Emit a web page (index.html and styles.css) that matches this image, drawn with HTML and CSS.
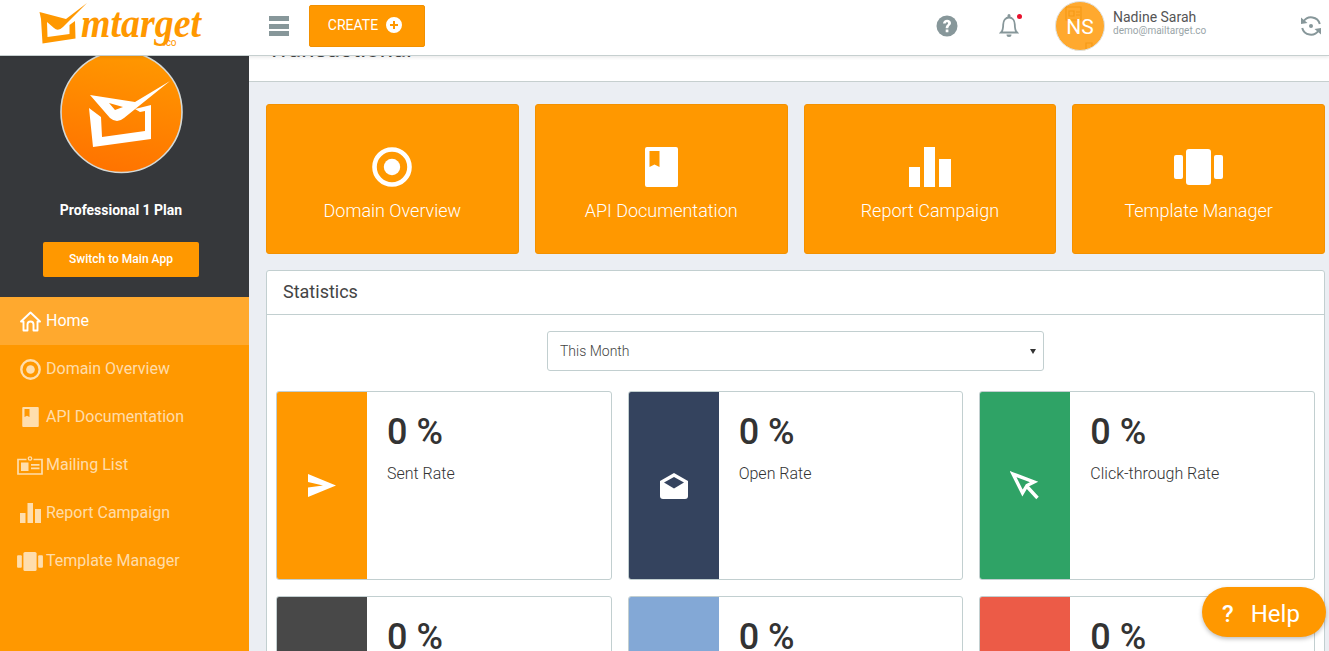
FILE: index.html
```html
<!DOCTYPE html>
<html lang="en">
<head>
<meta charset="utf-8">
<title>mtarget</title>
<link rel="stylesheet" href="styles.css">
</head>
<body>
<svg class="defs" aria-hidden="true">
  <symbol id="i-target" viewBox="0 0 40 40"><circle cx="20" cy="20" r="17.5" fill="none" stroke="currentColor" stroke-width="4.6"/><circle cx="20" cy="20" r="8.2" fill="currentColor"/></symbol>
  <symbol id="i-book" viewBox="0 0 33 40"><path fill="currentColor" fill-rule="evenodd" d="M2 0H31a2 2 0 0 1 2 2V38a2 2 0 0 1-2 2H2a2 2 0 0 1-2-2V2a2 2 0 0 1 2-2ZM4.500 4V20L9.500 17.500 14.500 20V4Z"/></symbol>
  <symbol id="i-bars" viewBox="0 0 42 40"><path fill="currentColor" d="M0 20H11V40H0ZM15 0H26V40H15ZM30 12H42V40H30Z"/></symbol>
  <symbol id="i-carousel" viewBox="0 0 49 36"><rect x="0" y="6" width="9" height="24" rx="2" fill="currentColor"/><rect x="12" y="0" width="25" height="36" rx="3" fill="currentColor"/><rect x="40" y="6" width="9" height="24" rx="2" fill="currentColor"/></symbol>
  <symbol id="i-id" viewBox="0 0 26 19"><path fill="none" stroke="currentColor" stroke-width="1.700" d="M9.500 3.500H1V18H25V3.500H16.500"/><circle cx="13" cy="2.500" r="1.700" fill="none" stroke="currentColor" stroke-width="1.300"/><path fill="currentColor" d="M4 6.500H11.500V15H4ZM14 8H22.500V9.800H14ZM14 11.500H22.500V13.300H14Z"/></symbol>
</svg>

<div class="app">
  <header class="topbar">
    <a class="logo" href="#" aria-label="mtarget.co">
      <svg width="210" height="52" viewBox="0 0 210 52">
        <path class="logo-flap" fill-rule="evenodd" d="M41 19 39.500 12 66 19 87 3 63 27Q58 32 54 28L47 22 47.500 37 69.500 34 69.500 25 75 21 75.500 38.500 42.500 43.500Z"/>
        <text class="logo-word" x="81" y="37" textLength="120" lengthAdjust="spacingAndGlyphs">mtarget</text>
        <text class="logo-co" x="163" y="46">.co</text>
      </svg>
    </a>
    <button class="burger" aria-label="Menu"><span></span><span></span><span></span></button>
    <button class="create">CREATE
      <svg width="16" height="16" viewBox="0 0 16 16"><path fill="#fff" fill-rule="evenodd" d="M8 0a8 8 0 1 1 0 16A8 8 0 0 1 8 0ZM7 4V7H4V9H7V12H9V9H12V7H9V4Z"/></svg>
    </button>
    <div class="top-right">
      <svg class="help-ic" width="22" height="22" viewBox="0 0 22 22"><circle cx="11" cy="11" r="10.500" fill="#87979a"/><path d="M7 8.500C7.100 6 9 4.700 11.100 4.700 13.400 4.700 15 6.100 15 8.100 15 10.600 12.400 10.800 12.400 13.300H9.700C9.700 10 12.100 9.800 12.100 8.300 12.100 7.700 11.700 7.300 11 7.300 10.300 7.300 9.900 7.800 9.800 8.500ZM9.700 14.500H12.400V17.200H9.700Z" fill="#fff"/></svg>
      <div class="bell">
        <svg width="20" height="24" viewBox="0 0 20 24"><path fill="none" stroke="#87979a" stroke-width="1.800" d="M2 18.500C4 16.500 4.200 15 4.200 10.500 4.200 6.500 6.500 3.500 10 3.500S15.800 6.500 15.800 10.500C15.800 15 16 16.500 18 18.500Z"/><path fill="#87979a" d="M8.500 1.500a1.500 1.500 0 0 1 3 0V4h-3ZM7.500 20.500h5a2.500 2.500 0 0 1-5 0Z"/></svg>
        <i class="dot"></i>
      </div>
      <div class="user">
        <div class="avatar">
          <svg class="avatar-deco" width="48" height="48" viewBox="0 0 48 48"><g fill="none" stroke="#f59a16" stroke-width="1.200"><path d="M10 5H25V18H10Z"/><path d="M13 9H18V14H13ZM20 10H24M20 13H24"/><path d="M30 47V41H36V47"/></g></svg>
          <span>NS</span>
        </div>
        <div class="user-text">
          <div class="user-name">Nadine Sarah</div>
          <div class="user-mail">demo@mailtarget.co</div>
        </div>
      </div>
      <svg class="sync" width="22" height="22" viewBox="0 0 22 22"><path fill="none" stroke="#87979a" stroke-width="2" d="M3.500 6.500A9 9 0 0 1 19.800 9M18.500 15.500A9 9 0 0 1 2.200 13"/><path fill="#87979a" d="M1 2.500 7.500 8 1 9ZM21 19.500 14.500 14 21 13Z"/><circle cx="11" cy="11" r="2" fill="#87979a"/></svg>
    </div>
  </header>

  <div class="body">
    <aside class="sidebar">
      <div class="profile">
        <svg class="plan-mark" width="124" height="118" viewBox="59 56 124 118">
          <defs><linearGradient id="g" x1="0.600" y1="0" x2="0.400" y2="1"><stop offset="0" stop-color="#ff9800"/><stop offset="1" stop-color="#ff7300"/></linearGradient></defs>
          <circle cx="121.500" cy="112" r="60.500" fill="url(#g)" stroke="#d5d9d6" stroke-width="1.600"/>
          <path fill="#fff" d="M89 108 93 147 151 139 151 105 135 109 140 112 145 111 145 131 102 137 101 117Z"/>
          <path fill="#fff" fill-rule="evenodd" d="M90 95 135 102 170 81 124 118Q117 124 110 118ZM109 103 115 110 123 107Z"/>
        </svg>
        <div class="plan">Professional 1 Plan</div>
        <button class="switch">Switch to Main App</button>
      </div>
      <nav class="nav">
        <a class="nav-item active" href="#"><span class="nav-ic"><svg width="21" height="21" viewBox="0 0 21 21"><path fill="none" stroke="currentColor" stroke-width="1.900" stroke-linejoin="round" d="M1 10.500 10.500 1.500 20 10.500H17.500V19.500H13.500V13.500A3 3 0 0 0 7.500 13.500V19.500H3.500V10.500Z"/></svg></span><span class="nav-txt">Home</span></a>
        <a class="nav-item" href="#"><span class="nav-ic"><svg width="21" height="21"><use href="#i-target"/></svg></span><span class="nav-txt">Domain Overview</span></a>
        <a class="nav-item" href="#"><span class="nav-ic"><svg width="17" height="20"><use href="#i-book"/></svg></span><span class="nav-txt">API Documentation</span></a>
        <a class="nav-item" href="#"><span class="nav-ic"><svg width="26" height="19"><use href="#i-id"/></svg></span><span class="nav-txt">Mailing List</span></a>
        <a class="nav-item" href="#"><span class="nav-ic"><svg width="21" height="20"><use href="#i-bars"/></svg></span><span class="nav-txt">Report Campaign</span></a>
        <a class="nav-item" href="#"><span class="nav-ic"><svg width="26" height="19"><use href="#i-carousel"/></svg></span><span class="nav-txt">Template Manager</span></a>
      </nav>
    </aside>

    <main class="main">
      <div class="titlebar"><h1>Transactional</h1></div>
      <div class="content">
        <section class="quick">
          <a class="quick-card" href="#"><svg width="40" height="40"><use href="#i-target"/></svg><span>Domain Overview</span></a>
          <a class="quick-card" href="#"><svg width="33" height="40"><use href="#i-book"/></svg><span>API Documentation</span></a>
          <a class="quick-card" href="#"><svg width="42" height="40"><use href="#i-bars"/></svg><span>Report Campaign</span></a>
          <a class="quick-card" href="#"><svg width="49" height="40"><use href="#i-carousel"/></svg><span>Template Manager</span></a>
        </section>

        <section class="panel">
          <div class="panel-head">Statistics</div>
          <div class="panel-body">
            <div class="filter">This Month<i class="caret"></i></div>
            <div class="stats">
              <div class="stat">
                <div class="stat-ic c-orange"><svg width="30" height="23" viewBox="0 0 30 23"><path fill="#fff" d="M1 0 29 11.500 1 23V13.500L16 11.500 1 8Z"/></svg></div>
                <div class="stat-text"><div class="stat-num">0 %</div><div class="stat-label">Sent Rate</div></div>
              </div>
              <div class="stat">
                <div class="stat-ic c-navy"><svg width="30" height="26" viewBox="0 0 30 26"><path fill="#fff" d="M15 0 29 8V23a3 3 0 0 1-3 3H4a3 3 0 0 1-3-3V8Z"/><path fill="#34435e" d="M5 9.500 15 4 25 9.500 15 15.500Z"/></svg></div>
                <div class="stat-text"><div class="stat-num">0 %</div><div class="stat-label">Open Rate</div></div>
              </div>
              <div class="stat">
                <div class="stat-ic c-green"><svg width="30" height="30" viewBox="0 0 30 30"><path fill="none" stroke="#fff" stroke-width="3.400" d="M3 3 24 11 17 14.500 12.500 22ZM16.500 15 27.500 27"/></svg></div>
                <div class="stat-text"><div class="stat-num">0 %</div><div class="stat-label">Click-through Rate</div></div>
              </div>
              <div class="stat">
                <div class="stat-ic c-grey"></div>
                <div class="stat-text"><div class="stat-num">0 %</div></div>
              </div>
              <div class="stat">
                <div class="stat-ic c-blue"></div>
                <div class="stat-text"><div class="stat-num">0 %</div></div>
              </div>
              <div class="stat">
                <div class="stat-ic c-red"></div>
                <div class="stat-text"><div class="stat-num">0 %</div></div>
              </div>
            </div>
          </div>
        </section>
      </div>
    </main>
  </div>

  <button class="help-btn"><b>?</b>Help</button>
</div>
</body>
</html>
```

FILE: styles.css
```css
* { box-sizing: border-box; }
html, body { height: 100%; margin: 0; overflow: hidden; }
body { font-family: Roboto, "Liberation Sans", sans-serif; color: #333; background: #ebeef3; }
a { text-decoration: none; color: inherit; }
button { font-family: inherit; border: 0; cursor: pointer; }
.defs { display: none; }

.app { height: 100%; display: flex; flex-direction: column; }

/* top bar */
.topbar { flex: none; height: 56px; padding-bottom: 3px; display: flex; align-items: center; background: #fff; border-bottom: 1px solid #c6cfcf; position: relative; z-index: 2; box-shadow: 0 2px 3px rgba(0,0,0,.07); }
.logo { display: block; width: 210px; height: 52px; flex: none; }
.logo svg { display: block; }
.logo-flap { fill: #ff9800; }
.logo-word { font-family: "Liberation Serif", serif; font-weight: 700; font-style: italic; font-size: 43px; fill: #ff9800; }
.logo-co { font-family: Roboto, sans-serif; font-size: 10px; fill: #ff9800; }

.burger { width: 20px; height: 20px; margin-left: 59px; padding: 0; background: none; display: flex; flex-direction: column; justify-content: space-between; }
.burger span { display: block; height: 5px; background: #87979a; }
.create { width: 116px; height: 42px; margin-left: 20px; display: flex; align-items: center; justify-content: center; gap: 8px; padding: 0 4px 2px 0; background: #ff9800; color: #fff; font-size: 14px; font-weight: 400; border-radius: 2px; border: 1px solid #f29000; }

.top-right { margin-left: auto; display: flex; align-items: center; padding-right: 7px; }
.help-ic { margin-right: 41px; }
.bell { position: relative; width: 20px; height: 24px; margin-right: 36px; }
.bell svg { display: block; }
.dot { position: absolute; top: 0; right: -3px; width: 5px; height: 5px; border-radius: 50%; background: #e8112d; }
.user { display: flex; align-items: center; gap: 8px; width: 245px; }
.avatar { position: relative; width: 50px; height: 50px; border-radius: 50%; overflow: hidden; background: #ffa92e; border: 1px solid #dfe3e3; color: #fff; font-size: 21px; display: flex; align-items: center; justify-content: center; }
.avatar span { position: relative; padding-top: 2px; }
.avatar-deco { position: absolute; left: 0; top: 0; }
.user-text { padding-bottom: 8px; }
.user-name { font-size: 14px; line-height: 16px; color: #555; }
.user-mail { font-size: 10px; line-height: 11px; color: #9aa5a8; }

/* page body */
.body { flex: 1; min-height: 0; display: flex; }
.sidebar { flex: none; width: 249px; background: #ff9800; }
.profile { height: 241px; padding-right: 7px; background: #36383b; display: flex; flex-direction: column; align-items: center; }
.plan-mark { display: block; flex: none; }
.plan { margin-top: 27px; font-size: 14px; line-height: 18px; font-weight: 700; color: #fff; }
.switch { margin-top: 23px; width: 156px; height: 35px; padding: 0 0 2px; background: #ff9800; color: #fff; font-size: 12px; font-weight: 500; border-radius: 2px; }

.nav-item { display: flex; align-items: center; height: 48px; padding-left: 17px; font-size: 16px; color: rgba(255,255,255,.68); }
.nav-item.active { background: #ffa92e; color: #fff; }
.nav-ic { width: 26px; margin-right: 3px; display: flex; align-items: center; justify-content: center; }
.nav-txt { padding-bottom: 2px; }

.main { flex: 1; min-width: 0; overflow: hidden; }
.titlebar { height: 26px; display: flex; align-items: flex-end; overflow: hidden; background: #fff; border-bottom: 1px solid #c6cfcf; padding: 0 0 18px 18px; }
.titlebar h1 { margin: 0; font-size: 24px; line-height: 28px; font-weight: 400; color: #444; flex: none; }
.content { padding: 22px 4px 0 17px; }

.quick { display: grid; grid-template-columns: repeat(4, 1fr); gap: 16px; }
.quick-card { height: 150px; display: flex; flex-direction: column; align-items: center; padding-top: 42px; background: #ff9800; color: #fff; border-radius: 3px; border: 1px solid #f39100; font-size: 18px; font-weight: 300; }
.quick-card svg { display: block; flex: none; }
.quick-card span { margin-top: 13px; line-height: 22px; }

.panel { margin-top: 16px; background: #fff; border: 1px solid #c2cfd0; border-radius: 3px; }
.panel-head { height: 44px; padding: 0 0 2px 16px; display: flex; align-items: center; border-bottom: 1px solid #c2cfd0; font-size: 18px; color: #444; }
.panel-body { padding: 16px 9px 0; }
.filter { position: relative; width: 497px; height: 40px; margin: 0 auto; padding-left: 12px; display: flex; align-items: center; border: 1px solid #c2cfd0; border-radius: 3px; font-size: 14px; font-weight: 300; color: #444; }
.caret { position: absolute; right: 7px; top: 17px; width: 0; height: 0; border: 3px solid transparent; border-top: 5px solid #333; border-bottom: 0; }

.stats { margin-top: 20px; display: grid; grid-template-columns: repeat(3, 1fr); gap: 16px; grid-auto-rows: 189px; }
.stat { display: flex; border: 1px solid #c2cfd0; border-radius: 3px; overflow: hidden; background: #fff; }
.stat-ic { flex: none; width: 90px; display: flex; align-items: center; justify-content: center; }
.c-orange { background: #ff9800; }
.c-navy { background: #34435e; }
.c-green { background: #2fa366; }
.c-grey { background: #484848; }
.c-blue { background: #83a8d6; }
.c-red { background: #ec5b47; }
.stat-text { padding: 19px 0 0 20px; }
.stat-num { font-size: 36px; line-height: 42px; font-weight: 500; color: #333; }
.stat-label { margin-top: 11px; font-size: 16px; line-height: 20px; font-weight: 300; color: #333; }

.help-btn { position: absolute; left: 1202px; top: 587px; width: 124px; height: 50px; border-radius: 25px; background: #ff9800; color: #fff; font-size: 24px; display: flex; align-items: center; justify-content: center; gap: 17px; box-shadow: 0 2px 4px rgba(0,0,0,.25); z-index: 3; padding: 4px 6px 0 0; }
.help-btn b { font-weight: 500; }
```
